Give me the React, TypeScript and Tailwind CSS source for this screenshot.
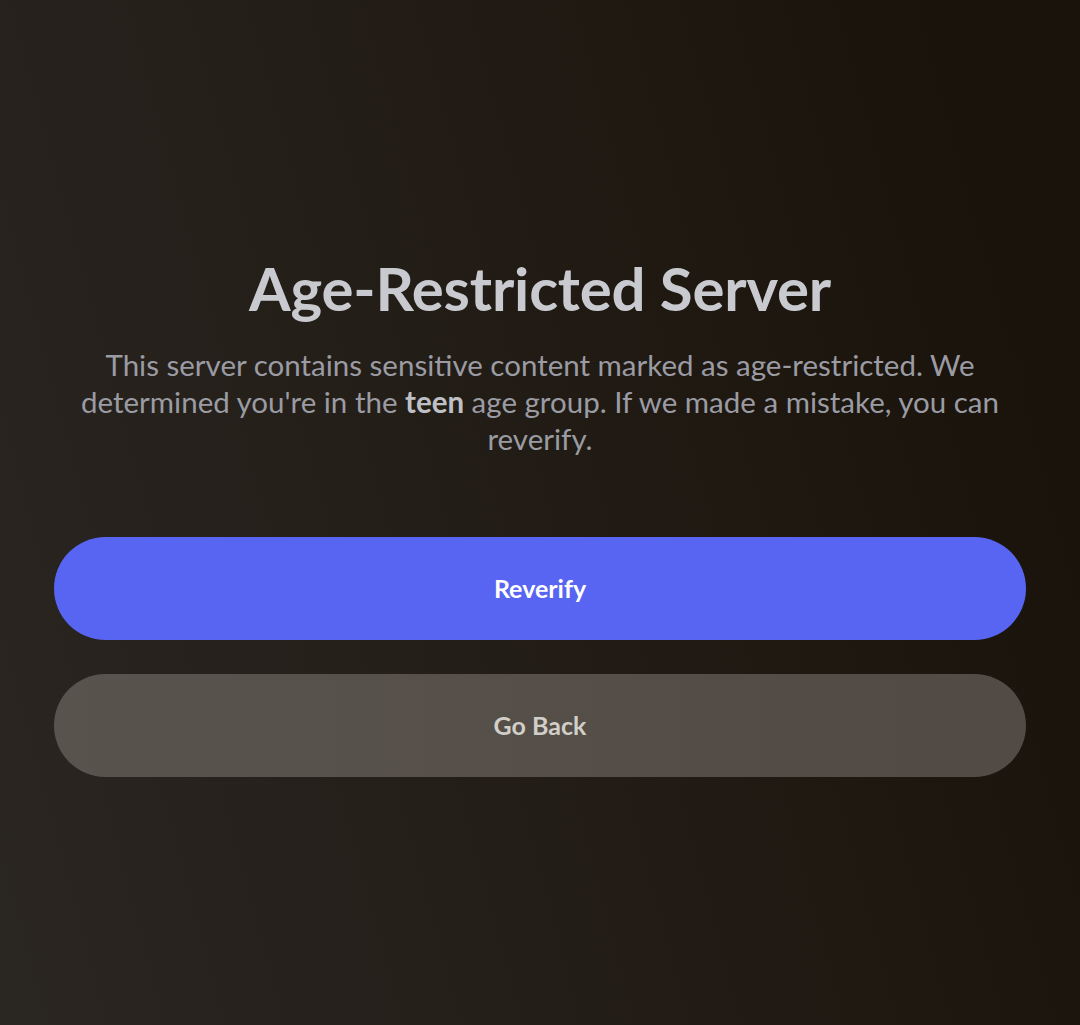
export default function App() {
  return (
    <div
      className="min-h-[1025px] w-[1080px] bg-[linear-gradient(75deg,#2a2621_0%,#231d17_45%,#1a140c_85%,#19130b_100%)] flex flex-col items-center"
      style={{ fontFamily: 'Lato, "Noto Sans", sans-serif' }}
    >
      {/* Header text */}
      <div className="pt-[250px] flex flex-col items-center px-[40px]">
        <h1 className="text-[60px] leading-[76px] font-bold text-[#c9cacf] tracking-[-0.2px]">
          Age-Restricted Server
        </h1>
        <p className="mt-[20px] text-[29.5px] leading-[37px] text-[#9a9ba3] text-center">
          This server contains sensitive content marked as age-restricted. We
          <br />
          determined you're in the <span className="font-bold text-[#bfc0c6]">teen</span> age group. If we made a mistake, you can
          <br />
          reverify.
        </p>
      </div>

      {/* Actions */}
      <div className="mt-[80px] w-full px-[54px] flex flex-col gap-[34px]">
        <button className="h-[103px] w-full rounded-full bg-[#5865f2] text-white text-[25px] font-bold">
          Reverify
        </button>
        <button className="h-[103px] w-full rounded-full bg-[linear-gradient(to_right,#58544d,#524a44)] text-[#d2cec8] text-[25px] font-bold">
          Go Back
        </button>
      </div>
    </div>
  );
}
